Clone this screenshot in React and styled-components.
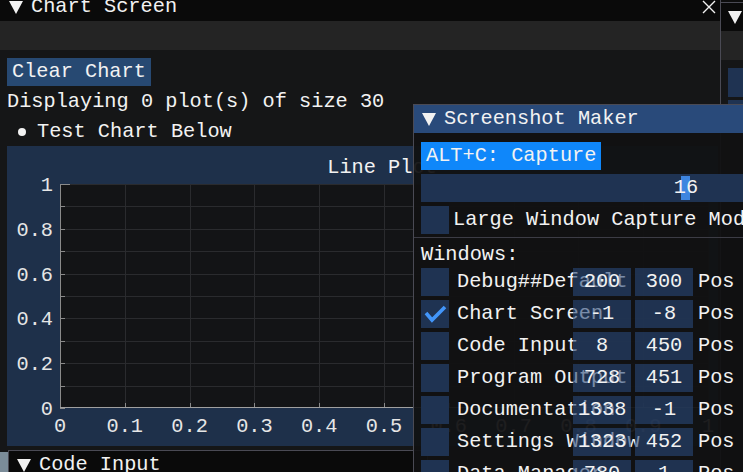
import React from "react";
import styled, { createGlobalStyle } from "styled-components";

const GlobalStyle = createGlobalStyle`
  html, body {
    margin: 0;
    padding: 0;
    background: #0d0d0d;
  }
`;

const Desktop = styled.div`
  position: relative;
  width: 743px;
  height: 472px;
  overflow: hidden;
  background: #0d0d0d;
  font-family: "Liberation Mono", "DejaVu Sans Mono", monospace;
  font-size: 20.3px;
  color: #f2f2f2;
`;

const Window = styled.div`
  position: absolute;
  left: ${(p) => p.$x}px;
  top: ${(p) => p.$y}px;
  width: ${(p) => p.$w}px;
  height: ${(p) => p.$h}px;
  box-sizing: border-box;
  border: 1px solid #4a4a54;
  background: ${(p) => p.$bg || "#151617"};
  display: flex;
  flex-direction: column;
  overflow: hidden;
`;

const TitleBar = styled.div`
  flex: none;
  height: 28px;
  display: flex;
  align-items: center;
  gap: 8px;
  padding: 0 4px 0 ${(p) => p.$pad}px;
  background: ${(p) => (p.$active ? "#294a7a" : "#0a0a0a")};
  white-space: nowrap;
  line-height: 28px;
`;

const Arrow = styled.span`
  flex: none;
  width: 0;
  height: 0;
  border-left: 7.5px solid transparent;
  border-right: 7.5px solid transparent;
  border-top: 13px solid #f2f2f2;
`;

const CloseIcon = styled.svg`
  margin-left: auto;
  flex: none;
`;

const MenuBar = styled.div`
  flex: none;
  height: 29px;
  background: #242424;
`;

const Content = styled.div`
  display: flex;
  flex-direction: column;
  align-items: flex-start;
  padding: ${(p) => p.$top}px 0 0 7px;
`;

const Button = styled.div`
  height: 28px;
  line-height: 28px;
  padding: 0 5px;
  background: ${(p) => (p.$active ? "#0f87fa" : "#274972")};
  white-space: nowrap;
  margin-top: ${(p) => p.$mt || 0}px;
`;

const TextLine = styled.div`
  height: 22px;
  line-height: 22px;
  white-space: nowrap;
  margin-top: ${(p) => p.$mt || 0}px;
`;

const BulletRow = styled.div`
  display: flex;
  align-items: center;
  height: 22px;
  line-height: 22px;
  margin-top: 8px;
  white-space: nowrap;
`;

const Dot = styled.span`
  width: 8px;
  height: 8px;
  border-radius: 50%;
  background: #f2f2f2;
  margin: 0 11px 0 11px;
`;

const PlotFrame = styled.div`
  margin-top: 3px;
  width: 711px;
  height: 300px;
  background: #1e304a;
  display: flex;
  flex-direction: column;
`;

const PlotTitle = styled.div`
  box-sizing: border-box;
  height: 38px;
  width: 697px;
  padding: 11px 0 0 53px;
  line-height: 22px;
  text-align: center;
  white-space: nowrap;
`;

const PlotSvg = styled.svg`
  overflow: visible;
  display: block;
  font-family: "Liberation Mono", "DejaVu Sans Mono", monospace;
  font-size: 20.3px;
`;

const Grip = styled.div`
  margin: 6px 0 0 -7px;
  width: 40px;
  height: 30px;
  background: #7b8c99;
`;

const Slider = styled.div`
  position: relative;
  margin-top: 4px;
  width: 530px;
  height: 28px;
  line-height: 28px;
  background: #1f3352;
  text-align: center;
`;

const SliderGrab = styled.span`
  position: absolute;
  left: 260px;
  top: 2px;
  width: 9px;
  height: 24px;
  background: #3d85e0;
`;

const SliderValue = styled.span`
  position: relative;
`;

const CheckRow = styled.div`
  display: flex;
  align-items: center;
  height: 28px;
  line-height: 28px;
  margin-top: ${(p) => p.$mt || 0}px;
  white-space: nowrap;
`;

const Box = styled.div`
  flex: none;
  width: 28px;
  height: 28px;
  background: #1f3352;
  display: flex;
  align-items: center;
  justify-content: center;
`;

const CheckLabel = styled.span`
  margin-left: ${(p) => p.$gap}px;
  flex: none;
  width: ${(p) => (p.$w ? `${p.$w}px` : "auto")};
  overflow: visible;
`;

const Separator = styled.div`
  align-self: stretch;
  margin: 3px 0 0 -7px;
  height: 1px;
  background: #3c3c45;
`;

const NumField = styled.div`
  flex: none;
  width: 58px;
  height: 28px;
  margin-left: ${(p) => p.$ml || 0}px;
  background: rgba(41, 74, 122, 0.6);
  text-align: center;
`;

const PosLabel = styled.span`
  margin-left: 5px;
`;

const FrameBlock = styled.div`
  width: 30px;
  height: 29px;
  margin-top: ${(p) => p.$mt}px;
  background: #1f3352;
`;

const rows = [
  { name: "Debug##Default", x: 200, y: 300 },
  { name: "Chart Screen", x: -1, y: -8, on: true },
  { name: "Code Input", x: 8, y: 450 },
  { name: "Program Output", x: 728, y: 451 },
  { name: "Documentation", x: 1338, y: -1 },
  { name: "Settings Window", x: 1323, y: 452 },
  { name: "Data Manager", x: 780, y: 1 },
];

const L = 53;
const W = 648;
const H = 224;
const SX = 64.8;
const SY = 22.4;
const steps = Array.from({ length: 11 }, (_, i) => i);
const crisp = (v) => Math.round(v) + 0.5;

function LinePlot() {
  return (
    <PlotSvg width="711" height="262">
      <rect x={L} y={0} width={W} height={H} fill="#131416" />
      {steps.slice(1).map((i) => (
        <line key={"v" + i} x1={crisp(L + i * SX)} x2={crisp(L + i * SX)} y1={0} y2={H} stroke="#2a2b2e" />
      ))}
      {steps.slice(1).map((i) => (
        <line key={"h" + i} x1={L} x2={L + W} y1={crisp(H - i * SY)} y2={crisp(H - i * SY)} stroke="#2a2b2e" />
      ))}
      {steps.map((i) => (
        <line key={"ty" + i} x1={L} x2={L + (i === 10 ? 10 : 5)} y1={crisp(H - i * SY)} y2={crisp(H - i * SY)} stroke="#8a8a8a" />
      ))}
      {steps.slice(1).map((i) => (
        <line key={"tx" + i} x1={crisp(L + i * SX)} x2={crisp(L + i * SX)} y1={H - 5} y2={H} stroke="#8a8a8a" />
      ))}
      <line x1={L + 0.5} x2={L + 0.5} y1={0} y2={H} stroke="#8a8a8a" />
      <line x1={L} x2={L + W} y1={H - 0.5} y2={H - 0.5} stroke="#a0a0a0" />
      {[0, 2, 4, 6, 8, 10].map((i) => (
        <text key={"ly" + i} x={46} y={H - i * SY + 7} textAnchor="end" fill="#e6e6e6">
          {i === 0 ? "0" : i === 10 ? "1" : `0.${i}`}
        </text>
      ))}
      {steps.map((i) => (
        <text key={"lx" + i} x={L + i * SX} y={248} textAnchor="middle" fill="#e6e6e6">
          {i === 0 ? "0" : i === 10 ? "1" : `0.${i}`}
        </text>
      ))}
    </PlotSvg>
  );
}

export default function App() {
  return (
    <Desktop>
      <GlobalStyle />

      <Window $x={-1} $y={-8} $w={722} $h={500}>
        <TitleBar $pad={9}>
          <Arrow />
          Chart Screen
          <CloseIcon width="14" height="14" viewBox="0 0 14 14">
            <path d="M1 1 L13 13 M13 1 L1 13" stroke="#f2f2f2" strokeWidth="1.4" fill="none" />
          </CloseIcon>
        </TitleBar>
        <MenuBar />
        <Content $top={8}>
          <Button>Clear Chart</Button>
          <TextLine $mt={5}>Displaying 0 plot(s) of size 30</TextLine>
          <BulletRow>
            <Dot />
            Test Chart Below
          </BulletRow>
          <PlotFrame>
            <PlotTitle>Line Plot</PlotTitle>
            <LinePlot />
          </PlotFrame>
          <Grip />
        </Content>
      </Window>

      <Window $x={720} $y={2} $w={40} $h={200}>
        <TitleBar $pad={7}>
          <Arrow />
        </TitleBar>
        <MenuBar />
        <Content $top={0}>
          <FrameBlock $mt={8} />
          <FrameBlock $mt={3} />
        </Content>
      </Window>

      <Window $x={8} $y={450} $w={420} $h={60}>
        <TitleBar $pad={8}>
          <Arrow />
          Code Input
        </TitleBar>
      </Window>

      <Window $x={413} $y={104} $w={340} $h={380} $bg="rgba(17, 17, 18, 0.94)">
        <TitleBar $pad={8} $active>
          <Arrow />
          Screenshot Maker
        </TitleBar>
        <Content $top={9}>
          <Button $active>ALT+C: Capture</Button>
          <Slider>
            <SliderGrab />
            <SliderValue>16</SliderValue>
          </Slider>
          <CheckRow $mt={4}>
            <Box />
            <CheckLabel $gap={4}>Large Window Capture Mode</CheckLabel>
          </CheckRow>
          <Separator />
          <TextLine $mt={6}>Windows:</TextLine>
          {rows.map((r, i) => (
            <CheckRow key={r.name} $mt={i === 0 ? 2 : 4}>
              <Box>
                {r.on && (
                  <svg width="28" height="28" viewBox="0 0 28 28">
                    <polyline points="5,13 11,20 24,7" fill="none" stroke="#4296fa" strokeWidth="3.6" />
                  </svg>
                )}
              </Box>
              <CheckLabel $gap={8} $w={116}>{r.name}</CheckLabel>
              <NumField>{r.x}</NumField>
              <NumField $ml={4}>{r.y}</NumField>
              <PosLabel>Pos</PosLabel>
            </CheckRow>
          ))}
        </Content>
      </Window>
    </Desktop>
  );
}
